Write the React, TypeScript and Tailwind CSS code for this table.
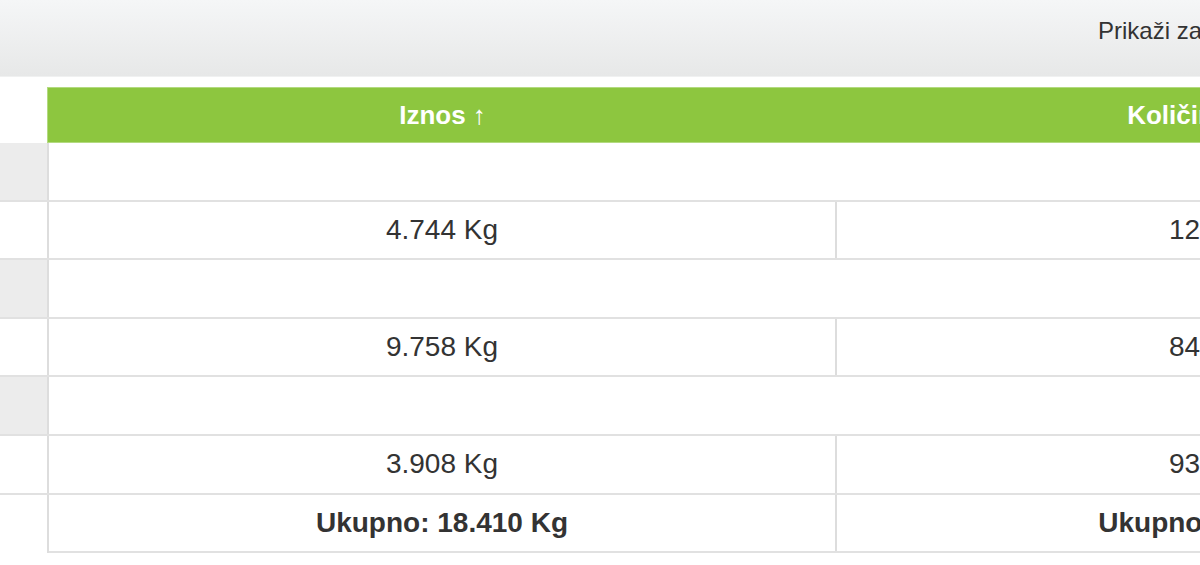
import React from "react"

type Row =
	| { kind: "group" }
	| { kind: "data"; iznos: string; kolicina: string }

const rows: Row[] = [
	{ kind: "group" },
	{ kind: "data", iznos: "4.744 Kg", kolicina: "1245 kom" },
	{ kind: "group" },
	{ kind: "data", iznos: "9.758 Kg", kolicina: "8420 kom" },
	{ kind: "group" },
	{ kind: "data", iznos: "3.908 Kg", kolicina: "9305 kom" },
]

const GroupRow = () => (
	<div className="flex h-[58.6px] border-b-2 border-[#e1e1e1]">
		<div className="w-[49px] shrink-0 bg-[#ececec] border-r-2 border-[#dddddd]" />
		<div className="flex-1 bg-white" />
	</div>
)

const DataRow = ({ iznos, kolicina }: { iznos: string; kolicina: string }) => (
	<div className="flex h-[58.6px] border-b-2 border-[#e1e1e1]">
		<div className="w-[49px] shrink-0 bg-white border-r-2 border-[#dddddd]" />
		<div className="w-[788px] shrink-0 flex items-center justify-center border-r-2 border-[#dddddd]">
			{iznos}
		</div>
		<div className="flex-1 flex items-center justify-center">{kolicina}</div>
	</div>
)

export default function App() {
	return (
		<div className="w-[1200px] h-[565px] overflow-hidden bg-white">
			<div
				className="w-[1624px] text-[#333333]"
				style={{ fontFamily: '"Liberation Sans", Arial, sans-serif' }}>
				{/* toolbar */}
				<div className="h-[77px] flex justify-end bg-gradient-to-b from-[#f5f6f7] to-[#e7e8e8] border-b border-[#f0f1f1]">
					<div className="w-[500px] mr-[26px] pt-[17px] text-[24px] leading-[1.15]">
						Prikaži zapise po stranici: 10
					</div>
				</div>

				<div className="mt-[10px]">
					{/* header */}
					<div className="flex h-[56px]">
						<div className="w-[47px] shrink-0 bg-white" />
						<div className="flex-1 flex bg-[#8dc63f] border-l border-t border-b border-[#b3da80] text-white font-bold text-[26px]">
							<div className="w-[789px] shrink-0 flex items-center justify-center">
								Iznos ↑
							</div>
							<div className="flex-1 flex items-center justify-center">Količina komada</div>
						</div>
					</div>

					{/* body */}
					<div className="text-[28px]">
						{rows.map((r, i) =>
							r.kind === "group" ? (
								<GroupRow key={i} />
							) : (
								<DataRow key={i} iznos={r.iznos} kolicina={r.kolicina} />
							)
						)}
						<div className="flex h-[58.6px] font-bold">
							<div className="w-[49px] shrink-0 bg-white border-r-2 border-[#dddddd]" />
							<div className="flex-1 flex border-b-2 border-[#e1e1e1]">
								<div className="w-[788px] shrink-0 flex items-center justify-center border-r-2 border-[#dddddd]">
									Ukupno: 18.410 Kg
								</div>
								<div className="flex-1 flex items-center justify-center">
									Ukupno: 18970 kom
								</div>
							</div>
						</div>
					</div>
				</div>
			</div>
		</div>
	)
}
